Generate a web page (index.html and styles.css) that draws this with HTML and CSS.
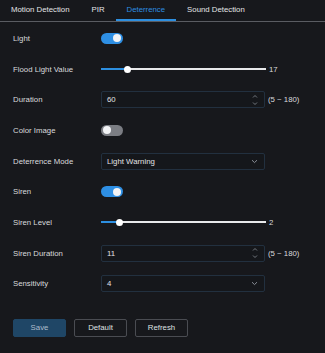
FILE: index.html
```html
<!DOCTYPE html>
<html lang="en">
<head>
    <meta charset="UTF-8">
    <meta name="viewport" content="width=device-width, initial-scale=1.0">
    <title>Deterrence</title>
    <link rel="stylesheet" href="styles.css">
</head>
<body>
    <div class="tabs">
        <div class="tab">Motion Detection</div>
        <div class="tab">PIR</div>
        <div class="tab active">Deterrence</div>
        <div class="tab">Sound Detection</div>
    </div>

    <div class="settings">
        <div class="row">
            <span class="label">Light</span>
            <span class="switch on"></span>
        </div>

        <div class="row">
            <span class="label">Flood Light Value</span>
            <div class="slider">
                <div class="track"><div class="fill" style="width: 26px"></div><span class="thumb" style="left: 26px"></span></div>
            </div>
            <span class="value">17</span>
        </div>

        <div class="row">
            <span class="label">Duration</span>
            <div class="field">
                <span>60</span>
                <svg class="spin" width="6" height="12" viewBox="0 0 6 12"><path d="M1 3.5 L3 1.5 L5 3.5 M1 8.5 L3 10.5 L5 8.5" fill="none" stroke="#7d828a" stroke-width="0.9"/></svg>
            </div>
            <span class="range">(5 ~ 180)</span>
        </div>

        <div class="row">
            <span class="label">Color Image</span>
            <span class="switch"></span>
        </div>

        <div class="row">
            <span class="label">Deterrence Mode</span>
            <div class="field">
                <span>Light Warning</span>
                <svg class="chevron" width="7" height="5" viewBox="0 0 7 5"><path d="M1 1.2 L3.5 3.6 L6 1.2" fill="none" stroke="#8a8f98" stroke-width="1"/></svg>
            </div>
        </div>

        <div class="row">
            <span class="label">Siren</span>
            <span class="switch on"></span>
        </div>

        <div class="row">
            <span class="label">Siren Level</span>
            <div class="slider">
                <div class="track"><div class="fill" style="width: 18px"></div><span class="thumb" style="left: 18px"></span></div>
            </div>
            <span class="value">2</span>
        </div>

        <div class="row">
            <span class="label">Siren Duration</span>
            <div class="field">
                <span>11</span>
                <svg class="spin" width="6" height="12" viewBox="0 0 6 12"><path d="M1 3.5 L3 1.5 L5 3.5 M1 8.5 L3 10.5 L5 8.5" fill="none" stroke="#7d828a" stroke-width="0.9"/></svg>
            </div>
            <span class="range">(5 ~ 180)</span>
        </div>

        <div class="row">
            <span class="label">Sensitivity</span>
            <div class="field">
                <span>4</span>
                <svg class="chevron" width="7" height="5" viewBox="0 0 7 5"><path d="M1 1.2 L3.5 3.6 L6 1.2" fill="none" stroke="#8a8f98" stroke-width="1"/></svg>
            </div>
        </div>
    </div>

    <div class="actions">
        <button class="btn primary">Save</button>
        <button class="btn">Default</button>
        <button class="btn">Refresh</button>
    </div>
</body>
</html>
```

FILE: styles.css
```css
body {
    margin: 0;
    background: #17181c;
    font-family: "Liberation Sans", Arial, sans-serif;
    font-size: 7.8px;
    color: #d9dadc;
    width: 325px;
    height: 353px;
    overflow: hidden;
}

.tabs {
    display: flex;
    height: 21px;
    border-bottom: 1px solid #5a5c62;
}

.tab {
    padding: 0 11px;
    line-height: 20px;
    border-bottom: 2px solid transparent;
    height: 19px;
    color: #e4e5e7;
}

.tab.active {
    color: #2d8fe0;
    border-bottom-color: #2d8fe0;
}

.settings {
    padding-top: 1px;
}

.row {
    display: flex;
    align-items: center;
    height: 30.7px;
    padding-left: 13px;
}

.label {
    width: 88px;
    flex-shrink: 0;
}

.switch {
    position: relative;
    width: 22px;
    height: 11px;
    border-radius: 6px;
    background: #7b7d83;
}

.switch::after {
    content: "";
    position: absolute;
    top: 1.5px;
    left: 2px;
    width: 8px;
    height: 8px;
    border-radius: 50%;
    background: #f2f3f5;
}

.switch.on {
    background: #2e8fe4;
}

.switch.on::after {
    left: 12px;
}

.slider {
    width: 165px;
}

.track {
    position: relative;
    height: 2px;
    background: #e8e9eb;
}

.fill {
    height: 2px;
    background: #2d8fe0;
}

.thumb {
    position: absolute;
    top: -2.5px;
    width: 7px;
    height: 7px;
    margin-left: -3.5px;
    border-radius: 50%;
    background: #ffffff;
}

.value {
    margin-left: 3px;
}

.field {
    display: flex;
    align-items: center;
    justify-content: space-between;
    box-sizing: border-box;
    width: 164px;
    height: 17px;
    padding: 0 6px 0 5px;
    border: 1px solid #22303f;
    border-radius: 2px;
    background: #15171b;
    color: #e2e3e5;
}

.spin,
.chevron {
    display: block;
}

.range {
    margin-left: 3px;
}

.actions {
    display: flex;
    gap: 8px;
    padding: 19.5px 0 0 13px;
}

.btn {
    width: 53px;
    height: 18px;
    padding: 0;
    border: 1px solid #4a4c52;
    border-radius: 2px;
    background: transparent;
    color: #dfe0e2;
    font-family: "Liberation Sans", Arial, sans-serif;
    font-size: 7.8px;
}

.btn.primary {
    background: #1f4666;
    border-color: #1f4666;
    color: #aebccb;
}
```
